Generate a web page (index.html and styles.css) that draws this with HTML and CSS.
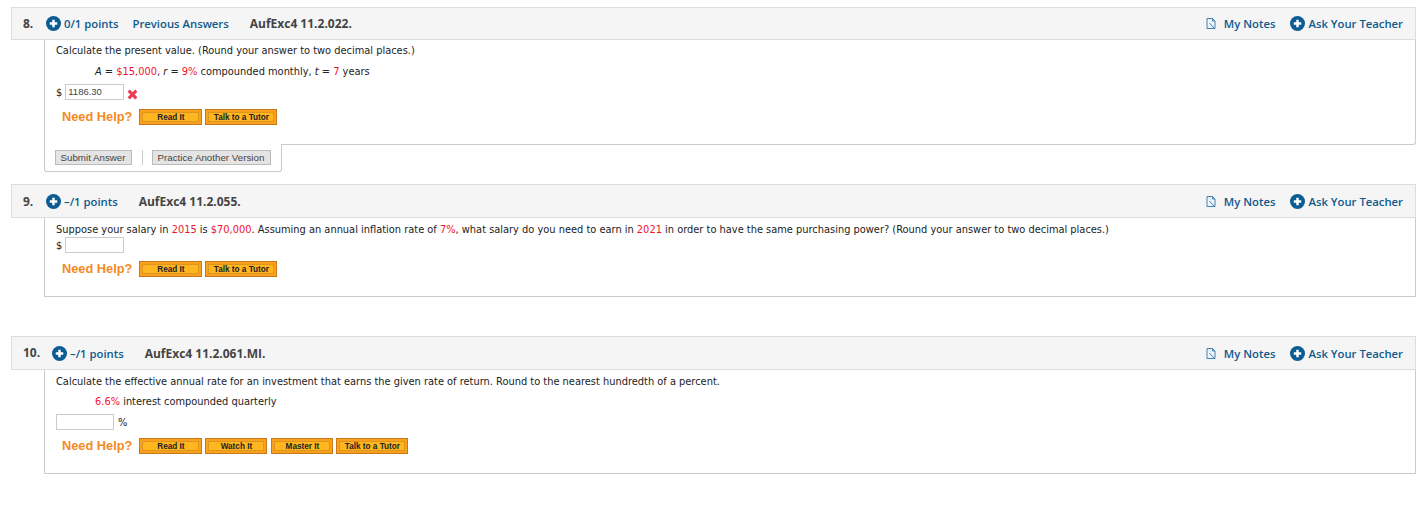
FILE: index.html
```html
<!DOCTYPE html>
<html>
<head>
    <link rel="stylesheet" href="styles.css">
</head>
<body>
    <div class="question q8">
        <div class="q-header">
            <span class="q-num">8.</span>
            <svg class="plus" viewBox="0 0 16 16"><circle cx="8" cy="8" r="8"/><path d="M8 4v8M4 8h8"/></svg>
            <span class="q-points">0/1 points</span>
            <span class="q-prev">Previous Answers</span>
            <span class="q-code">AufExc4 11.2.022.</span>
            <div class="q-links">
                <svg class="note" viewBox="0 0 10 11"><path d="M1 .5h5.500L9 3v7.500H1zM6.500.5V3H9M3.500 5l4.500 5"/></svg>
                <span class="my-notes">My Notes</span>
                <svg class="plus" viewBox="0 0 16 16"><circle cx="8" cy="8" r="8"/><path d="M8 4v8M4 8h8"/></svg>
                <span>Ask Your Teacher</span>
            </div>
        </div>
        <div class="q-body">
            <p class="line">Calculate the present value. (Round your answer to two decimal places.)</p>
            <p class="line given"><i>A</i> = <b>$15,000</b>, <i>r</i> = <b>9%</b> compounded monthly, <i>t</i> = <b>7</b> years</p>
            <div class="answer">
                <span>$</span>
                <span class="input">1186.30</span>
                <svg class="wrong" viewBox="0 0 10 10"><path d="M1.500 1.500l7 7M8.500 1.500l-7 7"/></svg>
            </div>
            <div class="help">
                <span class="need">Need Help?</span>
                <span class="btn">Read It</span>
                <span class="btn wide">Talk to a Tutor</span>
            </div>
        </div>
        <div class="actions">
            <span class="grey-btn">Submit Answer</span>
            <span class="sep"></span>
            <span class="grey-btn">Practice Another Version</span>
        </div>
    </div>

    <div class="question q9">
        <div class="q-header">
            <span class="q-num">9.</span>
            <svg class="plus" viewBox="0 0 16 16"><circle cx="8" cy="8" r="8"/><path d="M8 4v8M4 8h8"/></svg>
            <span class="q-points">&ndash;/1 points</span>
            <span class="q-code">AufExc4 11.2.055.</span>
            <div class="q-links">
                <svg class="note" viewBox="0 0 10 11"><path d="M1 .5h5.500L9 3v7.500H1zM6.500.5V3H9M3.500 5l4.500 5"/></svg>
                <span class="my-notes">My Notes</span>
                <svg class="plus" viewBox="0 0 16 16"><circle cx="8" cy="8" r="8"/><path d="M8 4v8M4 8h8"/></svg>
                <span>Ask Your Teacher</span>
            </div>
        </div>
        <div class="q-body">
            <p class="line">Suppose your salary in <b>2015</b> is <b>$70,000</b>. Assuming an annual inflation rate of <b>7%</b>, what salary do you need to earn in <b>2021</b> in order to have the same purchasing power? (Round your answer to two decimal places.)</p>
            <div class="answer">
                <span>$</span>
                <span class="input"></span>
            </div>
            <div class="help">
                <span class="need">Need Help?</span>
                <span class="btn">Read It</span>
                <span class="btn wide">Talk to a Tutor</span>
            </div>
        </div>
    </div>

    <div class="question q10">
        <div class="q-header">
            <span class="q-num">10.</span>
            <svg class="plus" viewBox="0 0 16 16"><circle cx="8" cy="8" r="8"/><path d="M8 4v8M4 8h8"/></svg>
            <span class="q-points">&ndash;/1 points</span>
            <span class="q-code">AufExc4 11.2.061.MI.</span>
            <div class="q-links">
                <svg class="note" viewBox="0 0 10 11"><path d="M1 .5h5.500L9 3v7.500H1zM6.500.5V3H9M3.500 5l4.500 5"/></svg>
                <span class="my-notes">My Notes</span>
                <svg class="plus" viewBox="0 0 16 16"><circle cx="8" cy="8" r="8"/><path d="M8 4v8M4 8h8"/></svg>
                <span>Ask Your Teacher</span>
            </div>
        </div>
        <div class="q-body">
            <p class="line">Calculate the effective annual rate for an investment that earns the given rate of return. Round to the nearest hundredth of a percent.</p>
            <p class="line given"><b>6.6%</b> interest compounded quarterly</p>
            <div class="answer">
                <span class="input short"></span>
                <span>%</span>
            </div>
            <div class="help">
                <span class="need">Need Help?</span>
                <span class="btn">Read It</span>
                <span class="btn">Watch It</span>
                <span class="btn">Master It</span>
                <span class="btn wide">Talk to a Tutor</span>
            </div>
        </div>
    </div>
</body>
</html>
```

FILE: styles.css
```css
html, body {
    background: #fff;
}

body {
    margin: 0;
    padding: 7px 0 0 11px;
    font-family: "DejaVu Sans", sans-serif;
    font-size: 9.85px;
    color: #222;
    overflow: hidden;
}

.q8 {
    margin-bottom: 12px;
}

.q9 {
    margin-bottom: 39px;
}

.q-header {
    box-sizing: border-box;
    display: flex;
    align-items: center;
    height: 34px;
    border: 1px solid #ddd;
    background: #f5f5f5;
    padding-left: 11px;
    font-family: "Open Sans", sans-serif;
    font-size: 11.3px;
    font-weight: 600;
    color: #0f5a8c;
}

.q8 .q-header {
    height: 33px;
}

.q-num {
    width: 23px;
    color: #444;
    font-size: 12px;
    font-weight: 700;
}

.q10 .q-num {
    width: 29px;
    padding-bottom: 2px;
}

.plus {
    width: 15px;
    height: 15px;
    margin-right: 3px;
    flex: none;
}

.plus circle {
    fill: #0b5c93;
}

.plus path {
    stroke: #fff;
    stroke-width: 2.6;
    fill: none;
}

.q-points {
    margin-right: 14px;
}

.q-prev {
    margin-right: 21px;
}

.q9 .q-points,
.q10 .q-points {
    margin-right: 21px;
}

.q-code {
    color: #444;
    font-size: 12px;
    font-weight: 700;
}

.q-links {
    margin-left: auto;
    display: flex;
    align-items: center;
    padding-right: 12px;
}

.note {
    width: 10px;
    height: 11px;
    margin-right: 8px;
}

.note path {
    fill: none;
    stroke: #3d80b5;
    stroke-width: 1;
}

.my-notes {
    margin-right: 15px;
}

.q-body {
    margin-left: 33px;
    padding: 5px 11px 19px;
    border-left: 1px solid #ccc;
    border-right: 1px solid #ccc;
    border-bottom: 1px solid #ccc;
}

.q8 .q-body {
    padding-top: 4px;
    border-bottom-right-radius: 3px;
}

.line {
    margin: 0 0 6px;
    line-height: 14px;
    white-space: nowrap;
}

.q8 .line:first-child {
    margin-bottom: 7px;
}

.q8 .given,
.q10 .given {
    margin-bottom: 5px;
}

.q9 .line {
    margin-bottom: 0;
}

.line b {
    font-weight: normal;
    color: #f5112b;
}

.given {
    padding-left: 39px;
}

.answer {
    display: flex;
    align-items: center;
    gap: 3px;
    height: 16px;
}

.input {
    box-sizing: border-box;
    width: 59px;
    height: 16px;
    line-height: 14px;
    border: 1px solid #ccc;
    background: #fff;
    padding-left: 2px;
    font-family: "Liberation Sans", sans-serif;
    font-size: 9.5px;
    color: #444;
}

.input.short {
    width: 58px;
    margin-right: 1px;
}

.wrong {
    width: 11px;
    height: 11px;
    margin-top: 4px;
}

.wrong path {
    stroke: #ef3b52;
    stroke-width: 2.8;
    fill: none;
}

.help {
    display: flex;
    align-items: flex-start;
    gap: 3px;
    height: 16px;
    margin-top: 8px;
    padding-left: 6px;
}

.q8 .help {
    margin-top: 9px;
}

.need {
    margin-right: 4px;
    line-height: 16px;
    font-family: "Liberation Sans", sans-serif;
    font-size: 12.8px;
    font-weight: 700;
    color: #f58a1f;
}

.btn {
    box-sizing: border-box;
    width: 63px;
    height: 16px;
    border: 1px solid #c9781a;
    background: #ffb61f;
    box-shadow: inset 0 0 0 2px #fba01c, inset 0 0 0 3px #dc961e;
    text-align: center;
    line-height: 15px;
    font-family: "Liberation Sans", sans-serif;
    font-size: 8.2px;
    font-weight: 700;
    color: #222;
}

.btn.wide {
    width: 72px;
}

.q10 .btn:nth-child(3),
.q10 .btn:nth-child(4) {
    width: 62px;
}

.q10 .btn:nth-child(4) {
    margin-left: 1px;
}

.actions {
    display: flex;
    align-items: center;
    gap: 10px;
    width: fit-content;
    margin: -1px 0 0 33px;
    padding: 6px 10px;
    border-left: 1px solid #ccc;
    border-right: 1px solid #ccc;
    border-bottom: 1px solid #ccc;
    border-bottom-left-radius: 3px;
    border-bottom-right-radius: 3px;
    background: #fff;
}

.grey-btn {
    box-sizing: border-box;
    height: 15px;
    padding: 0 5.500px 0 4.500px;
    line-height: 13px;
    background: #e4e4e4;
    border: 1px solid #bbb;
    font-family: "Liberation Sans", sans-serif;
    font-size: 9.75px;
    color: #444;
}

.sep {
    width: 1px;
    height: 15px;
    margin-right: -1px;
    background: #ccc;
}
```
